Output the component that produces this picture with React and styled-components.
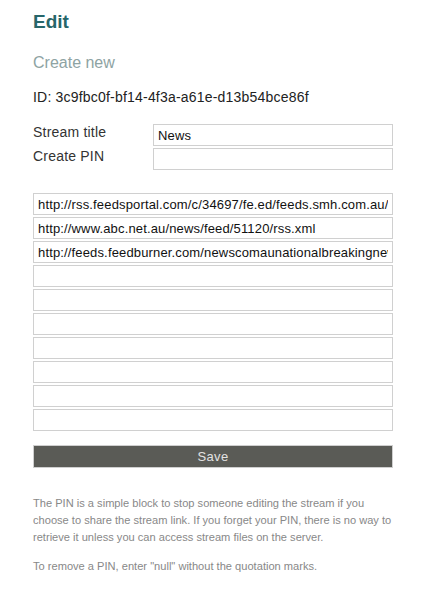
import React from "react";
import styled, { createGlobalStyle } from "styled-components";

const GlobalStyle = createGlobalStyle`
  body {
    margin: 0;
    background: #fff;
    font-family: "Liberation Sans", Arial, sans-serif;
  }
`;

const Page = styled.div`
  padding: 11px 32px 20px 33px;
`;

const Title = styled.h1`
  margin: 0;
  font-size: 19px;
  line-height: 22px;
  font-weight: bold;
  color: #27666a;
`;

const SubTitle = styled.h2`
  margin: 20px 0 0;
  font-size: 16px;
  line-height: 20px;
  font-weight: normal;
  color: #8ea3a3;
`;

const IdLine = styled.p`
  margin: 15px 0 0;
  font-size: 14px;
  line-height: 18px;
  color: #222;
  letter-spacing: 0.2px;
`;

const FieldGrid = styled.div`
  margin-top: 18px;
  display: grid;
  grid-template-columns: 120px 1fr;
  row-gap: 2px;
`;

const Label = styled.label`
  font-size: 14px;
  line-height: 16px;
  color: #333;
  letter-spacing: 0.2px;
`;

const TextInput = styled.input`
  box-sizing: border-box;
  display: block;
  width: 100%;
  height: 22px;
  margin: 0;
  padding: 0 4px;
  border: 1px solid #d0d0d0;
  background: #fff;
  font-family: "Liberation Sans", Arial, sans-serif;
  font-size: 13px;
  letter-spacing: 0.15px;
  color: #111;
  outline: none;
`;

const UrlList = styled.div`
  margin-top: 23px;
  display: flex;
  flex-direction: column;
  gap: 2px;
`;

const SaveButton = styled.button`
  box-sizing: border-box;
  display: block;
  width: 100%;
  height: 23px;
  margin-top: 14px;
  padding: 0;
  border: 1px solid #cfcfcf;
  background: #5a5b56;
  color: #e2e2e2;
  font-family: "Liberation Sans", Arial, sans-serif;
  font-size: 13px;
  letter-spacing: 0.3px;
`;

const Note = styled.p`
  margin: ${(p) => (p.first ? "27px" : "12px")} 0 0;
  font-size: 11.1px;
  line-height: 17px;
  color: #888;
`;

const urls = [
  "http://rss.feedsportal.com/c/34697/fe.ed/feeds.smh.com.au/rssheadlines/top.xml",
  "http://www.abc.net.au/news/feed/51120/rss.xml",
  "http://feeds.feedburner.com/newscomaunationalbreakingnewsndm",
  "",
  "",
  "",
  "",
  "",
  "",
  "",
];

export default function App() {
  return (
    <Page>
      <GlobalStyle />
      <Title>Edit</Title>
      <SubTitle>Create new</SubTitle>
      <IdLine>ID: 3c9fbc0f-bf14-4f3a-a61e-d13b54bce86f</IdLine>
      <FieldGrid>
        <Label>Stream title</Label>
        <TextInput defaultValue="News" />
        <Label>Create PIN</Label>
        <TextInput defaultValue="" />
      </FieldGrid>
      <UrlList>
        {urls.map((u, i) => (
          <TextInput key={i} defaultValue={u} />
        ))}
      </UrlList>
      <SaveButton type="button">Save</SaveButton>
      <Note first>
        The PIN is a simple block to stop someone editing the stream if you
        choose to share the stream link. If you forget your PIN, there is no
        way to retrieve it unless you can access stream files on the server.
      </Note>
      <Note>To remove a PIN, enter "null" without the quotation marks.</Note>
    </Page>
  );
}
